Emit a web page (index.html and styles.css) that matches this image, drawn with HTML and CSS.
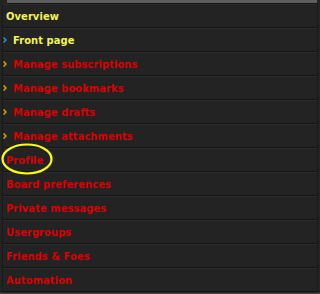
FILE: index.html
```html
<!DOCTYPE html>
<html>
<head>
<meta charset="utf-8">
<link rel="stylesheet" href="styles.css">
</head>
<body>
<div class="panel">
  <div class="topbar"></div>
  <ul class="menu">
    <li class="item head"><span class="label yellow">Overview</span></li>
    <li class="item sub"><svg class="bullet blue" width="4" height="6" viewBox="0 0 4 6"><path d="M0.5 0.5 L3 3 L0.5 5.5" fill="none" stroke="currentColor" stroke-width="1.4"/></svg><span class="label yellow">Front page</span></li>
    <li class="item sub"><svg class="bullet" width="4" height="6" viewBox="0 0 4 6"><path d="M0.5 0.5 L3 3 L0.5 5.5" fill="none" stroke="currentColor" stroke-width="1.4"/></svg><span class="label">Manage subscriptions</span></li>
    <li class="item sub"><svg class="bullet" width="4" height="6" viewBox="0 0 4 6"><path d="M0.5 0.5 L3 3 L0.5 5.5" fill="none" stroke="currentColor" stroke-width="1.4"/></svg><span class="label">Manage bookmarks</span></li>
    <li class="item sub"><svg class="bullet" width="4" height="6" viewBox="0 0 4 6"><path d="M0.5 0.5 L3 3 L0.5 5.5" fill="none" stroke="currentColor" stroke-width="1.4"/></svg><span class="label">Manage drafts</span></li>
    <li class="item sub"><svg class="bullet" width="4" height="6" viewBox="0 0 4 6"><path d="M0.5 0.5 L3 3 L0.5 5.5" fill="none" stroke="currentColor" stroke-width="1.4"/></svg><span class="label">Manage attachments</span></li>
    <li class="item head"><span class="label">Profile</span></li>
    <li class="item head"><span class="label">Board preferences</span></li>
    <li class="item head"><span class="label">Private messages</span></li>
    <li class="item head"><span class="label">Usergroups</span></li>
    <li class="item head"><span class="label">Friends &amp; Foes</span></li>
    <li class="item head"><span class="label">Automation</span></li>
  </ul>
  <div class="bottombar"></div>
  <svg class="circle" width="54" height="34" viewBox="0 0 54 34"><ellipse cx="26" cy="16" rx="24.5" ry="14.5" fill="none" stroke="#ffff00" stroke-width="2.2"/></svg>
</div>
</body>
</html>
```
FILE: styles.css
```css
html, body {
  margin: 0;
  padding: 0;
  background: #232323;
}
.panel {
  position: relative;
  height: 294px;
  overflow: hidden;
  background: #232323;
  font-family: "DejaVu Sans Condensed", "DejaVu Sans", sans-serif;
  font-weight: bold;
  font-size: 11px;
  letter-spacing: 0.1px;
}
.topbar {
  height: 3px;
  margin: 0 3px 0 7px;
  background: #5e5e5e;
  border-bottom: 1px solid #141414;
}
.menu {
  list-style: none;
  margin: 0 2px;
  padding: 0;
  border-left: 1px solid #1a1a1a;
  border-right: 1px solid #1a1a1a;
}
.item {
  height: 22px;
  display: flex;
  align-items: center;
  border-top: 1px solid #2c2c2c;
  border-bottom: 1px solid #141414;
  color: #d80000;
}
.item.head { padding-left: 3px; }
.item.sub { padding-left: 0; }
.label.yellow { color: #f6f44e; }
.bullet {
  flex: none;
  color: #d8b400;
  margin-right: 6px;
}
.bullet.blue { color: #3a8fd0; }
.bottombar {
  height: 2px;
  margin-top: 1px;
  background: #4a4a4a;
}
.circle {
  position: absolute;
  left: 1px;
  top: 143px;
}
```
